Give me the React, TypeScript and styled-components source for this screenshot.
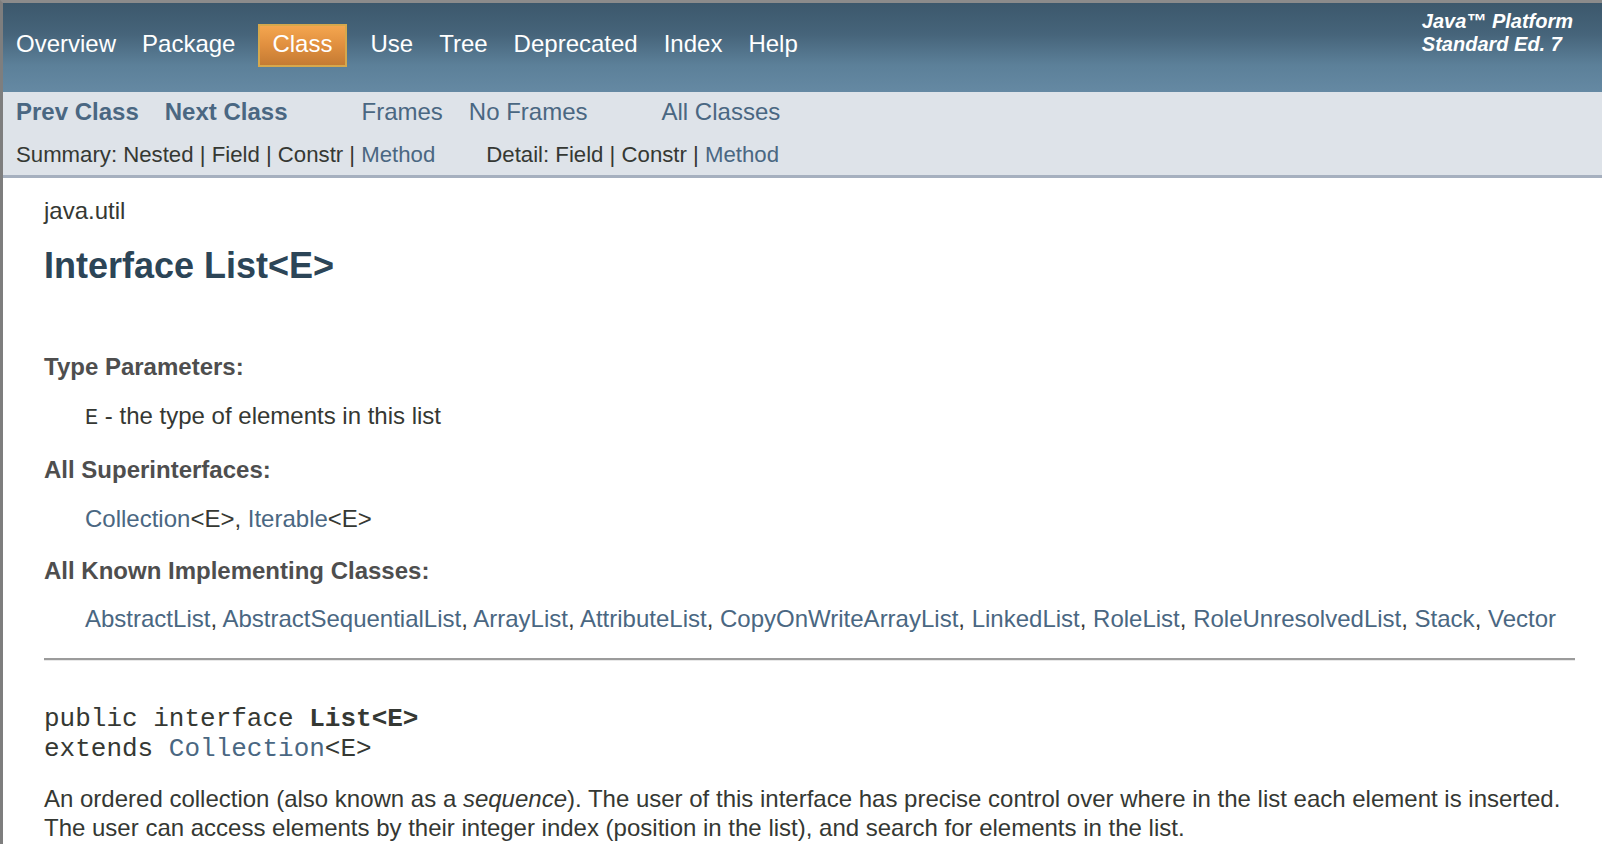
import React from "react"
import styled, { createGlobalStyle } from "styled-components"

const GlobalStyle = createGlobalStyle`
  html, body {
    margin: 0;
    padding: 0;
    background: #ffffff;
  }
  body {
    font-family: "Liberation Sans", Arial, Helvetica, sans-serif;
    color: #353833;
  }
`

const navItems = ["Overview", "Package", "Class", "Use", "Tree", "Deprecated", "Index", "Help"]

const implementing = [
  "AbstractList",
  "AbstractSequentialList",
  "ArrayList",
  "AttributeList",
  "CopyOnWriteArrayList",
  "LinkedList",
  "RoleList",
  "RoleUnresolvedList",
  "Stack",
  "Vector",
]

const App = () => {
  return (
    <>
      <GlobalStyle />
      <Page>
        <TopNav>
          <NavList>
            {navItems.map((item) => (
              <NavItem key={item} $active={item === "Class"}>
                {item}
              </NavItem>
            ))}
          </NavList>
          <AboutLanguage>
            Java™ Platform
            <br />
            Standard Ed. 7
          </AboutLanguage>
        </TopNav>

        <SubNav>
          <SubNavRow>
            <LinkGroup>
              <SubNavItem $bold>Prev Class</SubNavItem>
              <SubNavItem $bold>Next Class</SubNavItem>
            </LinkGroup>
            <LinkGroup>
              <SubNavItem>Frames</SubNavItem>
              <SubNavItem>No Frames</SubNavItem>
            </LinkGroup>
            <LinkGroup>
              <SubNavItem>All Classes</SubNavItem>
            </LinkGroup>
          </SubNavRow>
          <SummaryRow>
            <SummaryList>
              Summary:&nbsp;Nested&nbsp;|&nbsp;Field&nbsp;|&nbsp;Constr&nbsp;|&nbsp;<Link>Method</Link>
            </SummaryList>
            <SummaryList>
              Detail:&nbsp;Field&nbsp;|&nbsp;Constr&nbsp;|&nbsp;<Link>Method</Link>
            </SummaryList>
          </SummaryRow>
        </SubNav>

        <Content>
          <PackageName>java.util</PackageName>
          <Title>Interface List&lt;E&gt;</Title>

          <DescList>
            <Term $first>Type Parameters:</Term>
            <Def>
              <Code>E</Code> - the type of elements in this list
            </Def>
            <Term>All Superinterfaces:</Term>
            <Def>
              <Link>Collection</Link>&lt;E&gt;, <Link>Iterable</Link>&lt;E&gt;
            </Def>
            <Term>All Known Implementing Classes:</Term>
            <Def $nowrap>
              {implementing.map((name, i) => (
                <React.Fragment key={name}>
                  <Link>{name}</Link>
                  {i < implementing.length - 1 ? ", " : ""}
                </React.Fragment>
              ))}
            </Def>
          </DescList>

          <Rule />

          <Signature>
            public interface <b>List&lt;E&gt;</b>
            {"\n"}extends <Link>Collection</Link>&lt;E&gt;
          </Signature>

          <Block>
            An ordered collection (also known as a <i>sequence</i>). The user of this interface has
            precise control over where in the list each element is inserted. The user can access
            elements by their integer index (position in the list), and search for elements in the
            list.
          </Block>
        </Content>
      </Page>
    </>
  )
}

const Page = styled.div`
  min-height: 100vh;
  box-sizing: border-box;
  border-top: 3px solid #8b8b8b;
  border-left: 3px solid #7e7e7e;
  overflow: hidden;
`

const TopNav = styled.div`
  height: 89px;
  display: flex;
  justify-content: space-between;
  background: linear-gradient(
    to bottom,
    #3c586c 0%,
    #46647a 35%,
    #5c8099 70%,
    #6589a3 100%
  );
`

const NavList = styled.ul`
  display: flex;
  margin: 0;
  padding: 21px 0 0 0;
  list-style: none;
`

const NavItem = styled.li<{ $active?: boolean }>`
  height: 28px;
  padding: 4px ${(p) => (p.$active ? "13px" : "11px")} 7px ${(p) => (p.$active ? "12px" : "11px")};
  margin: 0 ${(p) => (p.$active ? "10px" : "0")};
  border: 2px solid ${(p) => (p.$active ? "#d6a84c" : "transparent")};
  background: ${(p) =>
    p.$active ? "linear-gradient(to bottom, #f4a64f 0%, #e08f3f 50%, #c47b33 100%)" : "none"};
  color: #ffffff;
  font-size: 24px;
  line-height: 28px;
  white-space: nowrap;
`

const AboutLanguage = styled.div`
  padding: 7px 29px 0 0;
  color: #ffffff;
  font-size: 20px;
  line-height: 22.5px;
  font-weight: bold;
  font-style: italic;
  white-space: nowrap;
`

const SubNav = styled.div`
  background: #dee3e9;
  padding: 6px 0 6px;
  border-bottom: 3px solid #a6b0bf;
`

const SubNavRow = styled.div`
  display: flex;
  height: 28px;
`

const LinkGroup = styled.ul`
  display: flex;
  margin: 0 48px 0 0;
  padding: 0;
  list-style: none;
`

const SubNavItem = styled.li<{ $bold?: boolean }>`
  padding: 0 13px;
  color: #4a6782;
  font-size: 24px;
  line-height: 28px;
  font-weight: ${(p) => (p.$bold ? "bold" : "normal")};
  white-space: nowrap;
`

const SummaryRow = styled.div`
  display: flex;
  margin-top: 15px;
  padding-left: 13px;
`

const SummaryList = styled.div`
  margin-right: 51px;
  font-size: 22.2px;
  line-height: 28px;
  white-space: nowrap;
`

const Link = styled.span`
  color: #4a6782;
`

const Content = styled.div`
  padding: 19px 27px 0 41px;
`

const PackageName = styled.div`
  font-size: 24px;
  line-height: 28px;
`

const Title = styled.h2`
  margin: 20px 0 0;
  color: #2c4557;
  font-size: 36px;
  line-height: 42px;
  font-weight: bold;
`

const DescList = styled.dl`
  margin: 0;
`

const Term = styled.dt<{ $first?: boolean }>`
  margin-top: ${(p) => (p.$first ? "66px" : "23.5px")};
  color: #4e4e4e;
  font-size: 24px;
  line-height: 28px;
  font-weight: bold;
`

const Def = styled.dd<{ $nowrap?: boolean }>`
  margin: 20.8px 0 0 41px;
  font-size: 24px;
  line-height: 28px;
  white-space: ${(p) => (p.$nowrap ? "nowrap" : "normal")};
`

const Code = styled.code`
  font-family: "Liberation Mono", "Courier New", monospace;
  font-size: 22px;
`

const Rule = styled.div`
  margin-top: 25px;
  height: 2px;
  background: #9b9b9b;
  border-bottom: 1px solid #e8e8e8;
`

const Signature = styled.pre`
  margin: 43px 0 0;
  font-family: "Liberation Mono", "Courier New", monospace;
  font-size: 26px;
  line-height: 30px;
  color: #353833;
  white-space: pre;
`

const Block = styled.div`
  margin-top: 21px;
  font-size: 24px;
  line-height: 28.5px;
`

export default App
